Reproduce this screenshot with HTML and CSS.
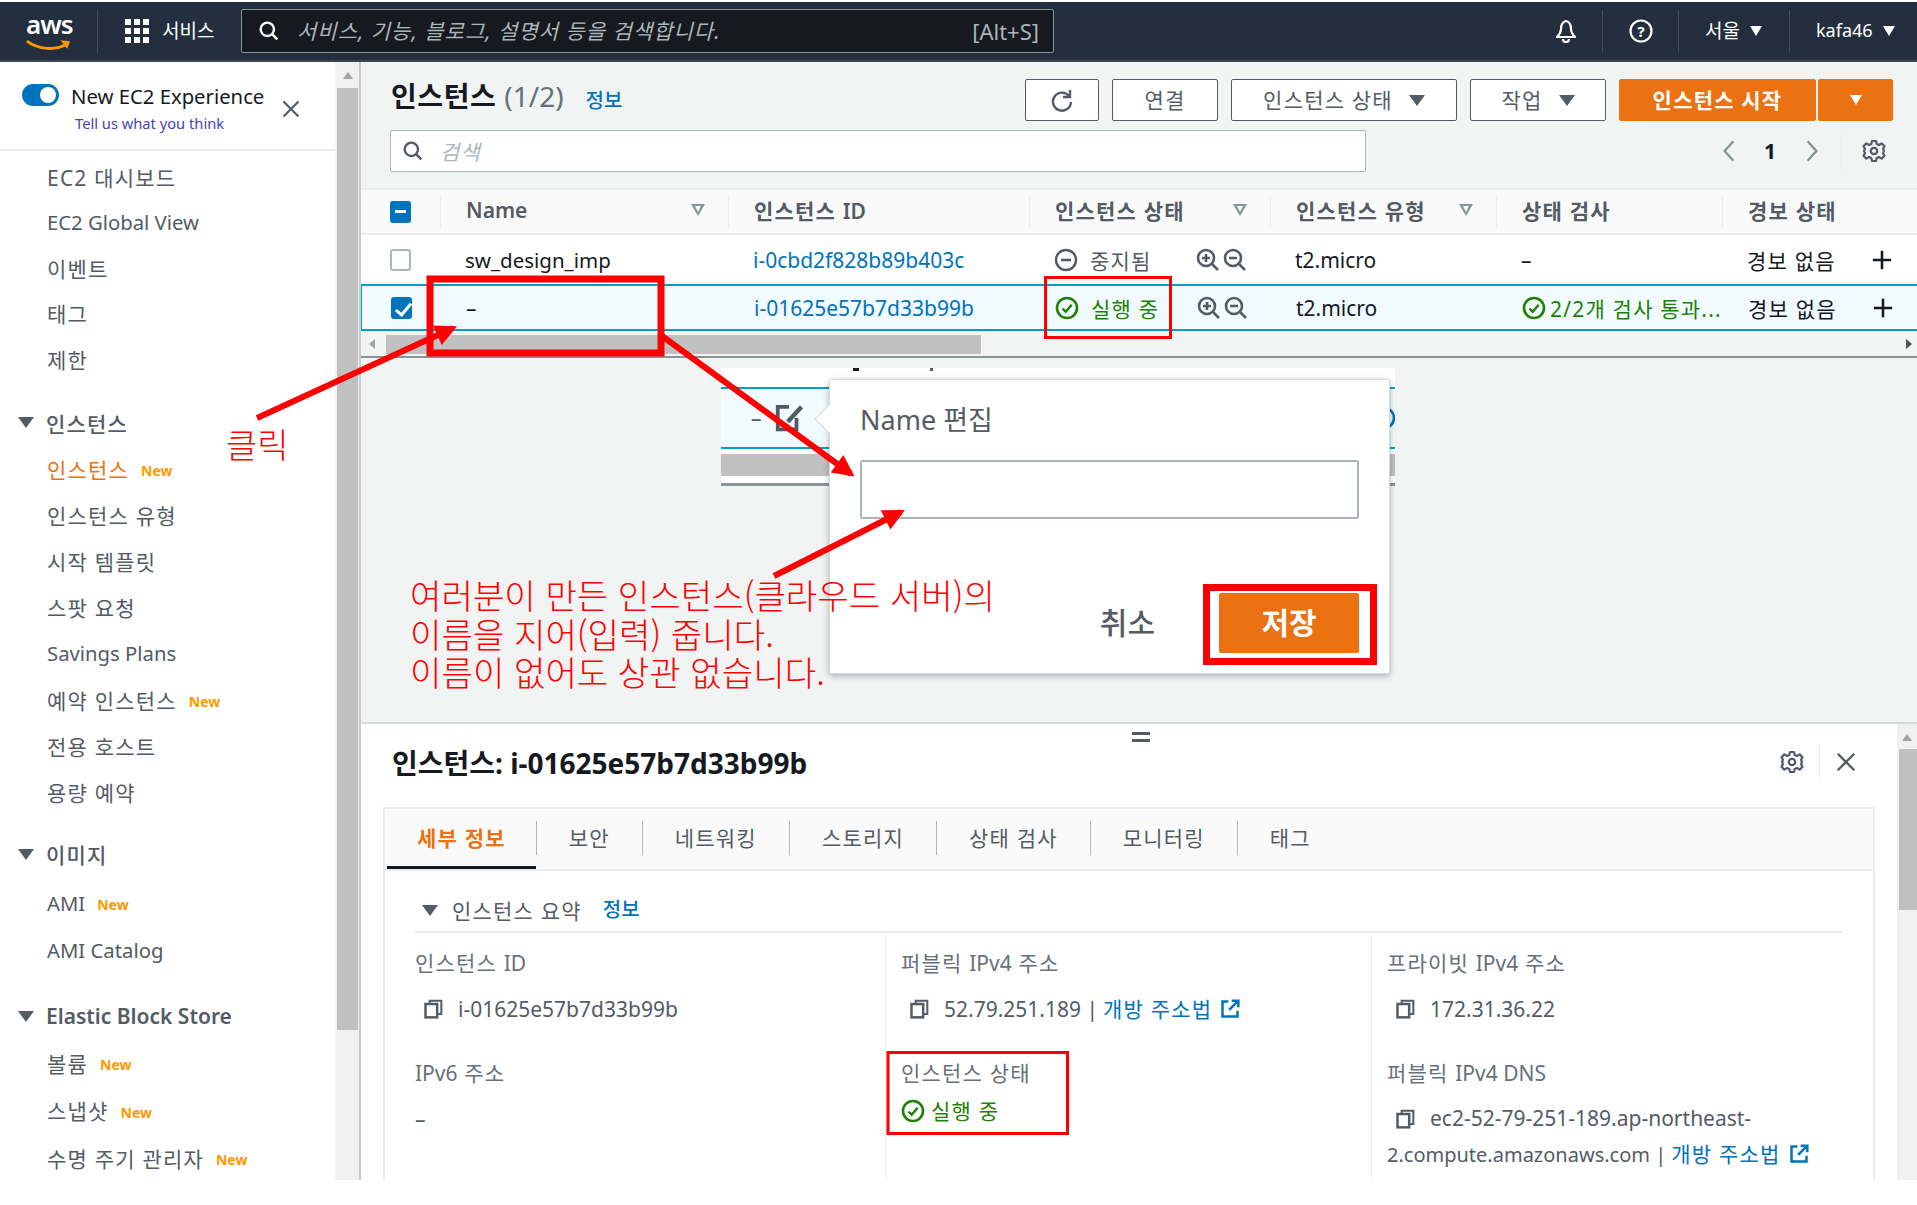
FILE: index.html
```html
<!DOCTYPE html>
<html lang="ko">
	<head>
		<meta charset="UTF-8" />
		<meta name="viewport" content="width=device-width, initial-scale=1.0" />
		<title>인스턴스 | EC2 Management Console</title>
		<link rel="stylesheet" href="styles.css">
	</head>
	<body>
		<svg class="defs" width="0" height="0">
			<defs>
				<symbol id="ok" viewBox="0 0 24 24"><circle cx="12" cy="12" r="10" fill="none" stroke="currentColor" stroke-width="2.6"/><path d="M7.5 12.5l3.2 3.2 6-7" fill="none" stroke="currentColor" stroke-width="2.4"/></symbol>
				<symbol id="stop" viewBox="0 0 24 24"><circle cx="12" cy="12" r="10" fill="none" stroke="currentColor" stroke-width="2.4"/><path d="M7 12h10" stroke="currentColor" stroke-width="2.6"/></symbol>
				<symbol id="zin" viewBox="0 0 24 24"><circle cx="10" cy="10" r="8" fill="none" stroke="currentColor" stroke-width="2.6"/><path d="M6 10h8M10 6v8M16 16l6 6" fill="none" stroke="currentColor" stroke-width="2.6"/></symbol>
				<symbol id="zout" viewBox="0 0 24 24"><circle cx="10" cy="10" r="8" fill="none" stroke="currentColor" stroke-width="2.6"/><path d="M6 10h8M16 16l6 6" fill="none" stroke="currentColor" stroke-width="2.6"/></symbol>
				<symbol id="plus" viewBox="0 0 24 24"><path d="M12 2v20M2 12h20" stroke="currentColor" stroke-width="2.8"/></symbol>
				<symbol id="gear" viewBox="0 0 24 24"><path d="M10 2h4l.7 3 2.3 1 2.7-1.6 2.8 2.8L21 9.9l1 2.1-1 2.1 1.5 2.7-2.8 2.8-2.7-1.6-2.3 1-.7 3h-4l-.7-3-2.3-1-2.7 1.6-2.8-2.8L3 14.1 2 12l1-2.1-1.5-2.7 2.8-2.8L7 6l2.3-1z" fill="none" stroke="currentColor" stroke-width="2.2" stroke-linejoin="round"/><circle cx="12" cy="12" r="3.2" fill="none" stroke="currentColor" stroke-width="2.2"/></symbol>
				<symbol id="copy" viewBox="0 0 24 24"><path d="M8 6V2h14v16h-5" fill="none" stroke="currentColor" stroke-width="2.4"/><rect x="3" y="6" width="14" height="16" fill="none" stroke="currentColor" stroke-width="3"/></symbol>
				<symbol id="ext" viewBox="0 0 24 24"><path d="M10 3H3v18h18v-7" fill="none" stroke="currentColor" stroke-width="3"/><path d="M14 2h8v8M22 2L11 13" fill="none" stroke="currentColor" stroke-width="3"/></symbol>
				<symbol id="close" viewBox="0 0 24 24"><path d="M3 3l18 18M21 3L3 21" stroke="currentColor" stroke-width="2.6"/></symbol>
				<symbol id="find" viewBox="0 0 24 24"><circle cx="10" cy="10" r="8" fill="none" stroke="currentColor" stroke-width="2.8"/><path d="M16 16l6 6" stroke="currentColor" stroke-width="3"/></symbol>
			</defs>
		</svg>

		<div class="app">
			<header class="topbar">
				<div class="logo">
					<span class="logo-text en">aws</span>
					<svg class="smile" viewBox="0 0 48 12"><path d="M2 2c12 9 30 10 42 3" fill="none" stroke="#ff9900" stroke-width="3"/><path d="M37 1l10 1-3 8z" fill="#ff9900"/></svg>
				</div>
				<div class="services">
					<div class="grid-icon"><i></i><i></i><i></i><i></i><i></i><i></i><i></i><i></i><i></i></div>
					<span class="lift">서비스</span>
				</div>
				<div class="topsearch">
					<svg class="icon-20"><use href="#find"/></svg>
					<span class="topsearch-text lift">서비스, 기능, 블로그, 설명서 등을 검색합니다.</span>
					<span class="shortcut en">[Alt+S]</span>
				</div>
				<div class="topright">
					<div class="top-item top-bell">
						<svg class="icon-24" viewBox="0 0 24 24"><path d="M12 2c-4 1-5 4-5 8 0 4-2 6-4 8h18c-2-2-4-4-4-8 0-4-1-7-5-8z" fill="none" stroke="#fff" stroke-width="2.2" stroke-linejoin="round"/><path d="M9 20c0 4 6 4 6 0" fill="none" stroke="#fff" stroke-width="2.2"/></svg>
					</div>
					<div class="top-item top-help">
						<svg class="icon-24" viewBox="0 0 24 24"><circle cx="12" cy="12" r="10.5" fill="none" stroke="#fff" stroke-width="2.2"/><text x="12" y="17.5" class="help-mark">?</text></svg>
					</div>
					<div class="top-item top-region"><span class="lift">서울</span><b class="caret-w"></b></div>
					<div class="top-item top-user en"><span class="lift">kafa46</span><b class="caret-w"></b></div>
				</div>
			</header>

			<div class="workspace">
				<aside class="sidebar">
					<div class="sidenav">
						<div class="experience en">
							<div class="toggle"><i></i></div>
							<div class="exp-text">
								<div class="exp-title">New EC2 Experience</div>
								<div class="exp-link">Tell us what you think</div>
							</div>
							<svg class="exp-close"><use href="#close"/></svg>
						</div>
						<ul class="nav nav-top">
							<li>EC2 대시보드</li>
							<li class="latin">EC2 Global View</li>
							<li>이벤트</li>
							<li>태그</li>
							<li>제한</li>
						</ul>
						<h3 class="nav-head"><b class="caret"></b>인스턴스</h3>
						<ul class="nav">
							<li class="active">인스턴스<em>New</em></li>
							<li>인스턴스 유형</li>
							<li>시작 템플릿</li>
							<li>스팟 요청</li>
							<li class="latin">Savings Plans</li>
							<li>예약 인스턴스<em>New</em></li>
							<li>전용 호스트</li>
							<li>용량 예약</li>
						</ul>
						<h3 class="nav-head nav-head-img"><b class="caret"></b>이미지</h3>
						<ul class="nav nav-low">
							<li class="latin">AMI<em>New</em></li>
							<li class="latin">AMI Catalog</li>
						</ul>
						<h3 class="nav-head nav-head-ebs en"><b class="caret"></b>Elastic Block Store</h3>
						<ul class="nav nav-low">
							<li>볼륨<em>New</em></li>
							<li>스냅샷<em>New</em></li>
							<li>수명 주기 관리자<em>New</em></li>
						</ul>
					</div>
					<div class="scroll-y side-scroll">
						<b class="arrow-up"></b>
						<div class="thumb"></div>
					</div>
				</aside>

				<main class="main">
					<section class="list">
						<div class="toolbar">
							<h1>인스턴스 <span class="en">(1/2)</span></h1>
							<a class="info">정보</a>
							<div class="actions">
								<button class="btn btn-refresh">
									<svg class="icon-24" viewBox="0 0 24 24"><path d="M19 8a9 9 0 1 0 2 6" fill="none" stroke="#545b64" stroke-width="2.4"/><path d="M20 2v7h-7" fill="none" stroke="#545b64" stroke-width="2.4"/></svg>
								</button>
								<button class="btn btn-connect"><span class="lift">연결</span></button>
								<button class="btn btn-state"><span class="lift">인스턴스 상태</span><b class="caret"></b></button>
								<button class="btn btn-action"><span class="lift">작업</span><b class="caret"></b></button>
								<button class="btn btn-start"><span class="lift">인스턴스 시작</span></button>
								<button class="btn btn-drop"><b class="caret-w"></b></button>
							</div>
						</div>
						<div class="filterbar">
							<div class="filter">
								<svg class="icon-20"><use href="#find"/></svg>
								<span>검색</span>
							</div>
							<div class="pager">
								<svg class="pager-arrow" viewBox="0 0 12 24"><path d="M10 3L2 12l8 9" fill="none" stroke="#879596" stroke-width="2.2"/></svg>
								<b>1</b>
								<svg class="pager-arrow" viewBox="0 0 12 24"><path d="M2 3l8 9-8 9" fill="none" stroke="#879596" stroke-width="2.2"/></svg>
							</div>
							<div class="pager-gear"><svg class="icon-24"><use href="#gear"/></svg></div>
						</div>

						<div class="tbl-row tbl-head">
							<div class="cell cell-check"><span class="check check-mixed"></span></div>
							<div class="cell en">Name<b class="sort"></b></div>
							<div class="cell"><span>인스턴스 <span class="en">ID</span></span></div>
							<div class="cell">인스턴스 상태<b class="sort"></b></div>
							<div class="cell">인스턴스 유형<b class="sort"></b></div>
							<div class="cell">상태 검사</div>
							<div class="cell">경보 상태</div>
						</div>
						<div class="tbl-row">
							<div class="cell cell-check"><span class="check"></span></div>
							<div class="cell en cell-name">sw_design_imp</div>
							<div class="cell link en">i-0cbd2f828b89b403c</div>
							<div class="cell">
								<span class="status muted"><svg class="icon-24"><use href="#stop"/></svg>중지됨</span>
								<span class="zooms"><svg class="icon-24"><use href="#zin"/></svg><svg class="icon-24"><use href="#zout"/></svg></span>
							</div>
							<div class="cell en">t2.micro</div>
							<div class="cell">–</div>
							<div class="cell cell-alarm">경보 없음<svg class="icon-22 plus"><use href="#plus"/></svg></div>
						</div>
						<div class="tbl-row selected">
							<div class="cell cell-check"><span class="check check-on"></span></div>
							<div class="cell">–</div>
							<div class="cell link en">i-01625e57b7d33b99b</div>
							<div class="cell">
								<span class="status green"><svg class="icon-24"><use href="#ok"/></svg>실행 중</span>
								<span class="zooms"><svg class="icon-24"><use href="#zin"/></svg><svg class="icon-24"><use href="#zout"/></svg></span>
							</div>
							<div class="cell en">t2.micro</div>
							<div class="cell green check-cell"><svg class="icon-24"><use href="#ok"/></svg><span>2/2개 검사 통과...</span></div>
							<div class="cell cell-alarm">경보 없음<svg class="icon-22 plus"><use href="#plus"/></svg></div>
						</div>
						<div class="scroll-x">
							<b class="arrow-left"></b>
							<div class="thumb-x"></div>
							<b class="arrow-right"></b>
						</div>
					</section>

					<section class="detail">
						<div class="detail-main">
							<div class="drag-handle"></div>
							<div class="detail-head">
								<h2>인스턴스: i-01625e57b7d33b99b</h2>
								<div class="detail-tools">
									<svg class="icon-24"><use href="#gear"/></svg>
									<i class="tool-sep"></i>
									<svg class="icon-22"><use href="#close"/></svg>
								</div>
							</div>
							<div class="tabs-box">
								<nav class="tabs">
									<span class="tab tab-active">세부 정보</span>
									<span class="tab">보안</span>
									<span class="tab">네트워킹</span>
									<span class="tab">스토리지</span>
									<span class="tab">상태 검사</span>
									<span class="tab">모니터링</span>
									<span class="tab">태그</span>
								</nav>
								<div class="summary">
									<div class="summary-head"><b class="caret"></b>인스턴스 요약<a class="info">정보</a></div>
									<div class="summary-grid">
										<div class="col">
											<div class="field">
												<label>인스턴스 <span class="en">ID</span></label>
												<div class="value en"><svg class="icon-20 copy"><use href="#copy"/></svg>i-01625e57b7d33b99b</div>
											</div>
											<div class="field">
												<label><span class="en">IPv6</span> 주소</label>
												<div class="value">–</div>
											</div>
										</div>
										<div class="col">
											<div class="field">
												<label>퍼블릭 <span class="en">IPv4</span> 주소</label>
												<div class="value"><svg class="icon-20 copy"><use href="#copy"/></svg><span class="en">52.79.251.189 |</span><span class="link open">개방 주소법<svg class="icon-20"><use href="#ext"/></svg></span></div>
											</div>
											<div class="field">
												<label>인스턴스 상태</label>
												<div class="value state-value green"><svg class="icon-24"><use href="#ok"/></svg>실행 중</div>
											</div>
										</div>
										<div class="col">
											<div class="field">
												<label>프라이빗 <span class="en">IPv4</span> 주소</label>
												<div class="value en"><svg class="icon-20 copy"><use href="#copy"/></svg>172.31.36.22</div>
											</div>
											<div class="field">
												<label>퍼블릭 <span class="en">IPv4 DNS</span></label>
												<div class="value value-wrap"><svg class="icon-20 copy"><use href="#copy"/></svg><span class="en">ec2-52-79-251-189.ap-northeast-</span><br><span class="dns-tail en">2.compute.amazonaws.com |</span><span class="link open">개방 주소법<svg class="icon-20"><use href="#ext"/></svg></span></div>
											</div>
										</div>
									</div>
								</div>
							</div>
						</div>
						<div class="scroll-y detail-scroll">
							<b class="arrow-up"></b>
							<div class="thumb"></div>
						</div>
					</section>
				</main>
			</div>
		</div>

		<!-- pasted screenshot of the name editor -->
		<div class="paste">
			<div class="paste-row">
				<span class="paste-dash">–</span>
				<svg class="paste-edit" viewBox="0 0 24 24"><path d="M12 3H3v18h15v-9" fill="none" stroke="#545b64" stroke-width="3"/><path d="M22 3L11 15" stroke="#545b64" stroke-width="3.5"/></svg>
				<svg class="icon-24 paste-tip"><use href="#ok"/></svg>
			</div>
			<div class="paste-scroll"></div>
		</div>
		<div class="popover">
			<div class="popover-arrow"></div>
			<div class="popover-title">Name 편집</div>
			<div class="popover-input"></div>
			<div class="popover-actions">
				<span class="popover-cancel">취소</span>
				<button class="popover-save">저장</button>
			</div>
		</div>

		<!-- red notes on top of the screenshot -->
		<svg class="marks" viewBox="0 0 1917 1205">
			<defs>
				<marker id="head" viewBox="0 0 10 10" refX="8" refY="5" markerWidth="4.4" markerHeight="3.6" orient="auto"><path d="M0 0L10 5 0 10z" fill="#f00"/></marker>
			</defs>
			<rect x="430" y="279" width="231" height="74" fill="none" stroke="#f00" stroke-width="7"/>
			<rect x="1045.5" y="277.5" width="125" height="60" fill="none" stroke="#f00" stroke-width="3"/>
			<rect x="888" y="1052.5" width="179.500" height="81" fill="none" stroke="#f00" stroke-width="3"/>
			<rect x="1206.5" y="587.5" width="167" height="74" fill="none" stroke="#f00" stroke-width="7"/>
			<line x1="257" y1="418" x2="453" y2="328" stroke="#f00" stroke-width="6" marker-end="url(#head)"/>
			<line x1="662" y1="336" x2="851" y2="474" stroke="#f00" stroke-width="6" marker-end="url(#head)"/>
			<line x1="774" y1="576" x2="901" y2="512" stroke="#f00" stroke-width="6" marker-end="url(#head)"/>
		</svg>
		<div class="note note-click">클릭</div>
		<div class="note note-main">여러분이 만든 인스턴스(클라우드 서버)의<br>이름을 지어(입력) 줍니다.<br>이름이 없어도 상관 없습니다.</div>
	</body>
</html>
```

FILE: styles.css
```css
* {
	box-sizing: border-box;
}
html,
body {
	margin: 0;
	padding: 0;
	background: #fff;
}
body {
	position: relative;
	width: 1917px;
	height: 1205px;
	overflow: hidden;
	font-family: "Noto Sans", "Noto Sans CJK KR", sans-serif;
	font-size: 21px;
	letter-spacing: 1.2px;
	color: #16191f;
}
ul {
	list-style: none;
	margin: 0;
	padding: 0;
}
h1,
h2,
h3 {
	margin: 0;
}
.en {
	letter-spacing: 0;
}
.lift {
	padding-bottom: 3px;
}
.defs {
	position: absolute;
}
.icon-20 {
	width: 20px;
	height: 20px;
	flex: none;
}
.icon-22 {
	width: 22px;
	height: 22px;
	flex: none;
}
.icon-24 {
	width: 24px;
	height: 24px;
	flex: none;
}
.app {
	height: 1180px;
	padding-top: 2px;
	display: flex;
	flex-direction: column;
}
.green {
	color: #1d8102;
}
.muted {
	color: #545b64;
}
.link,
.info {
	color: #0073bb;
}

/* top bar */
.topbar {
	height: 60px;
	flex: none;
	display: flex;
	align-items: center;
	background: #232f3e;
	color: #fff;
	border-bottom: 2px solid #3c4653;
}
.logo {
	width: 98px;
	height: 44px;
	padding-left: 26px;
	border-right: 1px solid #414d5c;
	position: relative;
}
.logo-text {
	display: block;
	font-size: 26px;
	font-weight: 600;
	line-height: 30px;
	letter-spacing: -1px;
}
.smile {
	display: block;
	width: 46px;
	height: 12px;
	margin-left: -1px;
}
.services {
	display: flex;
	align-items: center;
	gap: 13px;
	margin-left: 27px;
	width: 116px;
	font-size: 19px;
	letter-spacing: 0;
}
.grid-icon {
	display: grid;
	grid-template-columns: repeat(3, 6px);
	grid-auto-rows: 6px;
	gap: 3px;
}
.grid-icon i {
	background: #fff;
}
.topsearch {
	width: 813px;
	height: 44px;
	display: flex;
	align-items: center;
	padding: 0 14px 0 17px;
	background: #16191f;
	border: 1px solid #879596;
	border-radius: 2px;
	color: #d5dbdb;
}
.topsearch .icon-20 {
	color: #fff;
}
.topsearch-text {
	flex: 1;
	margin-left: 18px;
	font-style: italic;
	letter-spacing: 1px;
	color: #aab7b8;
}
.shortcut {
	font-size: 22px;
	color: #aab7b8;
}
.topright {
	margin-left: auto;
	display: flex;
	align-items: center;
	height: 46px;
}
.top-item {
	height: 42px;
	display: flex;
	align-items: center;
	font-size: 18px;
	letter-spacing: 0;
	gap: 10px;
	padding-left: 26px;
}
.top-item + .top-item {
	border-left: 1px solid #414d5c;
}
.top-bell {
	width: 64px;
	padding-left: 16px;
}
.top-help {
	width: 76px;
}
.top-region {
	width: 111px;
	font-size: 19px;
}
.top-user {
	width: 128px;
}
.help-mark {
	font-size: 15px;
	font-weight: 700;
	fill: #fff;
	text-anchor: middle;
}
.caret,
.caret-w {
	display: inline-block;
	width: 0;
	height: 0;
	border-left: 8px solid transparent;
	border-right: 8px solid transparent;
	border-top: 11px solid #545b64;
	flex: none;
}
.caret-w {
	border-left-width: 6px;
	border-right-width: 6px;
	border-top: 10px solid #fff;
}

/* layout */
.workspace {
	flex: 1;
	min-height: 0;
	display: flex;
}
.sidebar {
	width: 361px;
	flex: none;
	display: flex;
	background: #fff;
	border-right: 2px solid #c6ccd0;
	overflow: hidden;
}
.sidenav {
	width: 336px;
	flex: none;
	border-right: 1px solid #f2f3f3;
}
.scroll-y {
	flex: 1;
	background: #f1f1f1;
	position: relative;
	overflow: hidden;
}
.side-scroll {
	padding-top: 26px;
}
.side-scroll .thumb {
	height: 942px;
	background: #c1c1c1;
	margin: 0 1px;
}
.arrow-up {
	position: absolute;
	left: 50%;
	top: 10px;
	margin-left: -5px;
	border-left: 5px solid transparent;
	border-right: 5px solid transparent;
	border-bottom: 7px solid #a3a3a3;
}

/* sidebar */
.experience {
	height: 89px;
	position: relative;
	display: flex;
	padding: 22px 0 0 22px;
	border-bottom: 2px solid #eaeded;
}
.toggle {
	width: 37px;
	height: 22px;
	border-radius: 11px;
	background: #0073bb;
	position: relative;
	flex: none;
}
.toggle i {
	position: absolute;
	right: 3px;
	top: 3px;
	width: 16px;
	height: 16px;
	border-radius: 50%;
	background: #fff;
}
.exp-text {
	margin-left: 12px;
	margin-top: -1px;
}
.exp-title {
	font-size: 20.3px;
	line-height: 26px;
	white-space: nowrap;
}
.exp-link {
	margin-left: 4px;
	margin-top: 5px;
	font-size: 14.7px;
	line-height: 18px;
	color: #44b;
}
.exp-close {
	width: 20px;
	height: 20px;
	margin: 15px 0 0 17px;
	flex: none;
	color: #545b64;
}
.nav {
	color: #545b64;
}
.nav li {
	height: 46.2px;
	padding-left: 47px;
	display: flex;
	align-items: center;
	white-space: nowrap;
}
.nav .latin {
	font-size: 20.300px;
	letter-spacing: 0;
}
.nav-top {
	margin-top: 3px;
}
.nav-top li {
	height: 45.500px;
}
.nav-low li {
	height: 47.500px;
}
.nav em {
	margin-left: 12px;
	margin-top: 4px;
	font-style: normal;
	font-size: 14px;
	font-weight: 700;
	letter-spacing: 0;
	color: #ff9900;
}
.nav .active {
	color: #ec7211;
}
.nav-head {
	height: 46px;
	margin-top: 18px;
	padding-left: 18px;
	display: flex;
	align-items: center;
	gap: 12px;
	font-size: 21px;
	font-weight: 500;
	color: #545b64;
}
.nav-head-img {
	margin-top: 16px;
	margin-bottom: 2px;
}
.nav-head-ebs {
	margin-top: 19px;
	font-weight: 600;
}

/* instance list */
.main {
	flex: 1;
	min-width: 0;
	display: flex;
	flex-direction: column;
}
.list {
	height: 660px;
	flex: none;
	background: #f2f3f3;
}
.toolbar {
	height: 68px;
	padding: 16px 24px 0 30px;
	display: flex;
	align-items: flex-start;
}
.toolbar h1 {
	font-size: 28px;
	font-weight: 700;
	line-height: 36px;
	letter-spacing: 0.6px;
}
.toolbar h1 span {
	font-weight: 400;
	color: #687078;
}
.info {
	font-size: 20px;
	font-weight: 500;
	letter-spacing: 0;
	margin-left: 22px;
	line-height: 46px;
}
.actions {
	margin-left: auto;
	display: flex;
	gap: 13px;
	padding-top: 1px;
}
.btn {
	height: 42px;
	padding: 0;
	display: flex;
	align-items: center;
	justify-content: center;
	gap: 16px;
	font: inherit;
	letter-spacing: inherit;
	color: #545b64;
	background: #fff;
	border: 1px solid #545b64;
	border-radius: 2px;
}
.btn-refresh {
	width: 74px;
}
.btn-connect {
	width: 106px;
}
.btn-state {
	width: 226px;
}
.btn-action {
	width: 136px;
}
.btn-start {
	width: 197px;
	border-color: #ec7211;
	background: #ec7211;
	color: #fff;
	font-weight: 700;
}
.btn-drop {
	width: 75px;
	margin-left: -11px;
	border-color: #ec7211;
	background: #ec7211;
}
.filterbar {
	height: 58px;
	padding: 0 0 0 29px;
	display: flex;
	align-items: flex-start;
}
.filter {
	width: 976px;
	height: 42px;
	display: flex;
	align-items: center;
	gap: 17px;
	padding-left: 12px;
	background: #fff;
	border: 1px solid #aab7b8;
	border-radius: 2px;
	color: #545b64;
}
.filter span {
	font-style: italic;
	color: #aab7b8;
}
.pager {
	margin-left: 356px;
	width: 97px;
	height: 42px;
	display: flex;
	align-items: center;
	justify-content: space-between;
}
.pager b {
	font-weight: 700;
}
.pager-arrow {
	width: 14px;
	height: 26px;
}
.pager-gear {
	margin-left: 22px;
	height: 42px;
	padding-left: 20px;
	display: flex;
	align-items: center;
	border-left: 1px solid #eaeded;
	color: #545b64;
}
.tbl-row {
	display: grid;
	grid-template-columns: 79px 288px 301px 241px 226px 226px 195px;
	height: 49px;
	background: #fff;
	align-items: center;
}
.cell {
	display: flex;
	align-items: center;
	justify-content: space-between;
	padding: 0 23px 0 25px;
	white-space: nowrap;
	min-width: 0;
}
.cell.link,
.cell:nth-child(5),
.cell:nth-child(6) {
	justify-content: flex-start;
}
.cell-check {
	padding-left: 29px;
}
.cell-name {
	font-size: 20.500px;
}
.tbl-head {
	height: 47px;
	background: #fafafa;
	border-top: 2px solid #eaeded;
	border-bottom: 2px solid #eaeded;
	color: #545b64;
	font-weight: 600;
}
.tbl-head .cell {
	height: 30px;
	padding-bottom: 4px;
	border-left: 1px solid #eaeded;
	justify-content: space-between;
}
.tbl-head .cell-check {
	padding-bottom: 0;
	border-left: 0;
}
.selected {
	height: 47px;
	background: #f1faff;
	border-top: 2px solid #00a1c9;
	border-bottom: 2px solid #00a1c9;
	border-left: 1px solid #00a1c9;
}
.check {
	display: block;
	width: 21px;
	height: 22px;
	border: 2px solid #aab7b8;
	border-radius: 3px;
	background: #fff;
	position: relative;
}
.check-mixed,
.check-on {
	background: #0073bb;
	border-color: #0073bb;
}
.check-mixed::after {
	content: "";
	position: absolute;
	left: 3px;
	right: 3px;
	top: 7px;
	height: 3px;
	background: #fff;
}
.check-on::after {
	content: "";
	position: absolute;
	left: 6px;
	top: 1px;
	width: 6px;
	height: 13px;
	border-right: 3px solid #fff;
	border-bottom: 3px solid #fff;
	transform: rotate(40deg);
}
.sort {
	position: relative;
	border-left: 7px solid transparent;
	border-right: 7px solid transparent;
	border-top: 12px solid #879596;
}
.sort::after {
	content: "";
	position: absolute;
	left: -3px;
	top: -10px;
	border-left: 3px solid transparent;
	border-right: 3px solid transparent;
	border-top: 6px solid #fafafa;
}
.status {
	display: flex;
	align-items: center;
	gap: 12px;
}
.zooms {
	display: flex;
	gap: 3px;
	color: #545b64;
}
.check-cell {
	gap: 4px;
	padding-right: 0;
	justify-content: flex-start;
	color: #1d8102;
}
.cell-alarm {
	padding-right: 24px;
}
.plus {
	color: #16191f;
}
.scroll-x {
	height: 27px;
	position: relative;
	padding: 4px 0 0 25px;
	border-bottom: 2px solid #879596;
}
.thumb-x {
	width: 595px;
	height: 19px;
	background: #c1c1c1;
}
.arrow-left,
.arrow-right {
	position: absolute;
	top: 8px;
	border-top: 5px solid transparent;
	border-bottom: 5px solid transparent;
}
.arrow-left {
	left: 8px;
	border-right: 6px solid #a3a3a3;
}
.arrow-right {
	right: 5px;
	border-left: 6px solid #505050;
}

/* detail panel */
.detail {
	flex: 1;
	min-height: 0;
	display: flex;
	background: #fff;
	border-top: 2px solid #d5dbdb;
	overflow: hidden;
}
.detail-main {
	flex: 1;
	position: relative;
	padding: 0 22px 0 22px;
}
.drag-handle {
	position: absolute;
	left: 771px;
	top: 8px;
	width: 18px;
	height: 10px;
	border-top: 3px solid #545b64;
	border-bottom: 3px solid #545b64;
}
.detail-head {
	height: 83px;
	display: flex;
	align-items: center;
	justify-content: space-between;
	padding: 0 18px 0 9px;
}
.detail-head h2 {
	font-size: 28px;
	font-weight: 700;
	letter-spacing: 0;
	margin-top: -8px;
}
.detail-tools {
	display: flex;
	align-items: center;
	gap: 15px;
	margin-top: -7px;
	color: #545b64;
}
.tool-sep {
	width: 1px;
	height: 36px;
	background: #eaeded;
}
.tabs-box {
	height: 400px;
	border: 2px solid #eaeded;
	border-bottom: 0;
}
.tabs {
	height: 62px;
	padding: 12px 0 0 2px;
	display: flex;
	align-items: flex-start;
	background: #fafafa;
	border-bottom: 2px solid #eaeded;
	color: #545b64;
	position: relative;
}
.tab {
	height: 34px;
	line-height: 34px;
	padding: 0 32px;
	border-right: 1px solid #aab7b8;
	white-space: nowrap;
}
.tab:last-child {
	border-right: 0;
}
.tab-active {
	color: #ec7211;
	font-weight: 700;
	padding: 0 30px;
	position: relative;
}
.tab-active::after {
	content: "";
	position: absolute;
	left: 0;
	right: 0;
	bottom: -14px;
	height: 3px;
	background: #16191f;
}
.summary {
	padding: 0 30px;
}
.summary-head {
	height: 62px;
	padding: 18px 0 0 7px;
	display: flex;
	align-items: center;
	gap: 14px;
	color: #545b64;
	border-bottom: 2px solid #eaeded;
}
.summary-head .info {
	margin-left: 7px;
}
.summary-grid {
	display: grid;
	grid-template-columns: 470px 486px 1fr;
}
.col {
	height: 260px;
	padding-top: 16px;
}
.col + .col {
	border-left: 1px solid #eaeded;
	padding-left: 15px;
}
.field {
	height: 110px;
	color: #687078;
}
.field label {
	display: block;
	line-height: 28px;
}
.value {
	margin-top: 14px;
	line-height: 36px;
	color: #545b64;
	display: flex;
	align-items: center;
	white-space: nowrap;
}
.copy {
	margin: 0 15px 0 8px;
}
.open {
	display: inline-flex;
	align-items: center;
	gap: 8px;
	margin-left: 5px;
	vertical-align: top;
}
.state-value {
	margin-top: 6px;
	gap: 6px;
	color: #1d8102;
}
.value-wrap {
	display: block;
	margin-top: 13px;
}
.value-wrap .copy {
	vertical-align: -3px;
}
.dns-tail {
	font-size: 20px;
}
.detail-scroll {
	width: 20px;
	flex: none;
	padding-top: 25px;
}
.detail-scroll .thumb {
	height: 161px;
	margin-left: 2px;
	background: #c1c1c1;
}

/* pasted name editor */
.paste {
	position: absolute;
	left: 721px;
	top: 368px;
	width: 674px;
	height: 118px;
	background: #fff;
	overflow: hidden;
}
.paste::before,
.paste::after {
	content: "";
	position: absolute;
	top: 0;
	height: 3px;
	background: #16191f;
}
.paste::before {
	left: 132px;
	width: 6px;
}
.paste::after {
	left: 209px;
	width: 3px;
	background: #545b64;
}
.paste-row {
	margin-top: 19px;
	height: 62px;
	display: flex;
	align-items: center;
	gap: 11px;
	padding-left: 30px;
	background: #f1faff;
	border-top: 2px solid #00a1c9;
	border-bottom: 2px solid #00a1c9;
	color: #545b64;
}
.paste-edit {
	width: 30px;
	height: 30px;
}
.paste-tip {
	margin-left: auto;
	margin-right: -1px;
	color: #0073bb;
}
.paste-scroll {
	margin-top: 5px;
	height: 32px;
	background: #c1c1c1;
	background-clip: content-box;
	padding-bottom: 7px;
	border-bottom: 3px solid #879596;
}
.popover {
	position: absolute;
	left: 829px;
	top: 379px;
	width: 561px;
	height: 295px;
	padding: 22px 30px 20px 30px;
	display: flex;
	flex-direction: column;
	background: #fff;
	border: 1px solid #d5dbdb;
	border-radius: 2px;
	box-shadow: 0 2px 6px rgba(0, 28, 36, 0.3);
	letter-spacing: 0;
}
.popover-arrow {
	position: absolute;
	left: -11px;
	top: 28px;
	width: 22px;
	height: 22px;
	background: #fff;
	border-left: 1px solid #d5dbdb;
	border-bottom: 1px solid #d5dbdb;
	transform: rotate(45deg);
}
.popover-title {
	position: relative;
	font-size: 27px;
	line-height: 36px;
	color: #545b64;
}
.popover-input {
	height: 60px;
	margin-top: 22px;
	background: #fff;
	border: 2px solid #aab7b8;
	border-radius: 2px;
}
.popover-actions {
	margin-top: 74px;
	display: flex;
	align-items: center;
	justify-content: flex-end;
	gap: 64px;
}
.popover-cancel {
	font-size: 30px;
	font-weight: 500;
	padding-bottom: 5px;
	color: #545b64;
}
.popover-save {
	width: 140px;
	height: 60px;
	padding: 0 0 5px;
	font: inherit;
	font-size: 30px;
	font-weight: 700;
	color: #fff;
	background: #ec7211;
	border: 0;
	border-radius: 2px;
}

/* red notes */
.marks {
	position: absolute;
	left: 0;
	top: 0;
	width: 1917px;
	height: 1205px;
}
.note {
	position: absolute;
	color: #f00;
	font-family: "Noto Sans CJK KR", sans-serif;
	font-weight: 300;
	letter-spacing: 0;
	white-space: nowrap;
}
.note-click {
	left: 226px;
	top: 421px;
	font-size: 34px;
	line-height: 46px;
}
.note-main {
	left: 410px;
	top: 575px;
	font-size: 34.200px;
	line-height: 38.500px;
}
```
